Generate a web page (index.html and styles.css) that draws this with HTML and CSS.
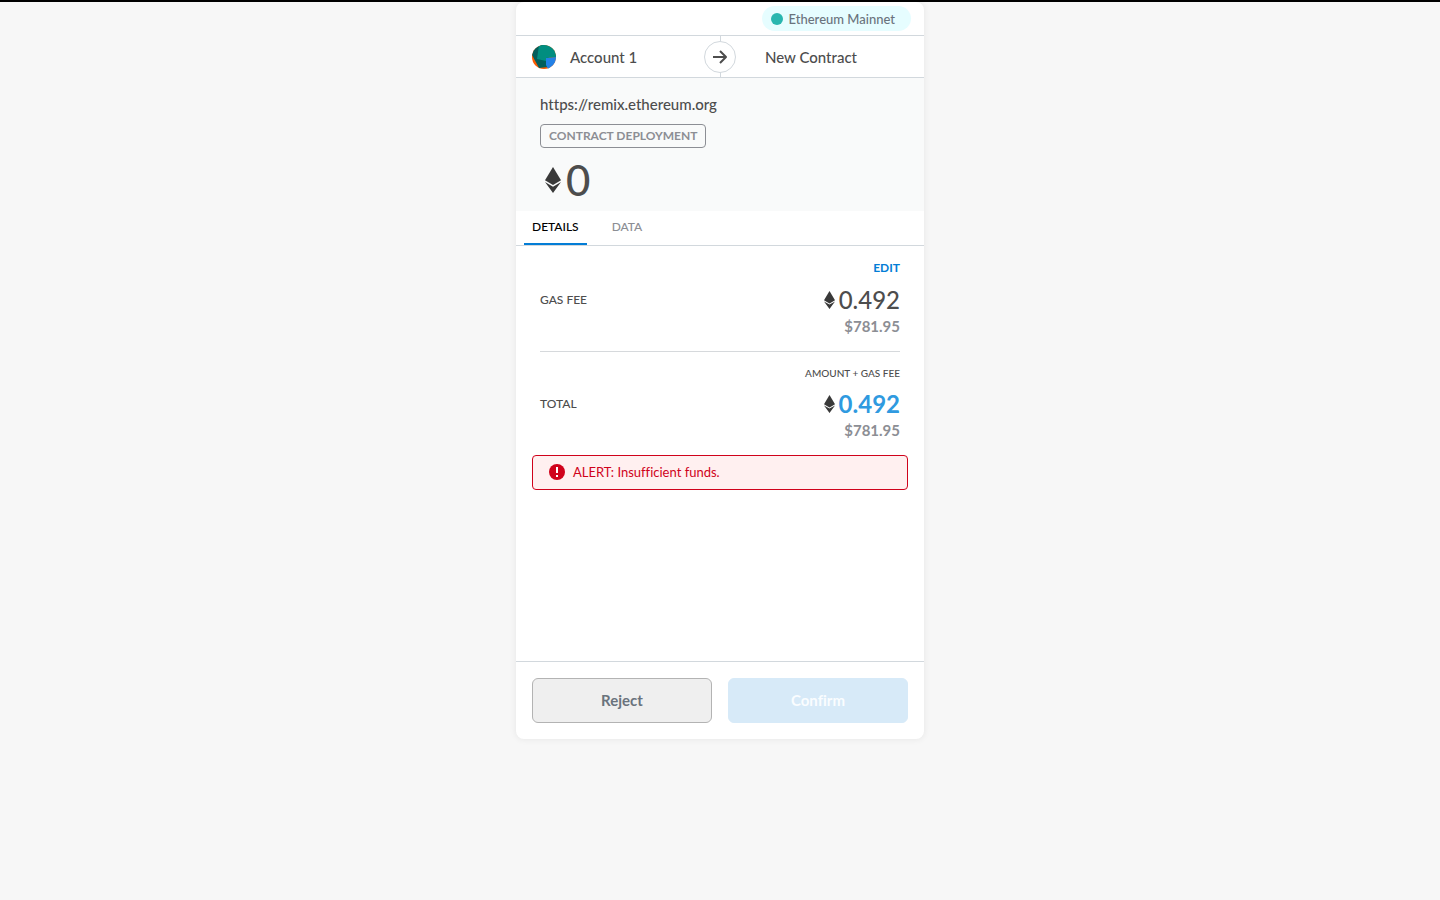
FILE: index.html
```html
<!DOCTYPE html>
<html lang="en">
<head>
<meta charset="utf-8">
<meta name="viewport" content="width=device-width, initial-scale=1">
<title>Contract Deployment</title>
<link rel="stylesheet" href="styles.css">
</head>
<body>
<svg class="sprite" aria-hidden="true">
  <symbol id="eth" viewBox="0 0 16 26">
    <path d="M8 0 0 13.3 8 18l8-4.700z" fill="#393939"/>
    <path d="M0 15l8 11 8-11-8 4.700z" fill="#393939"/>
  </symbol>
</svg>
<main class="card">
  <header class="network-row">
    <div class="network"><span class="network-dot"></span><span>Ethereum Mainnet</span></div>
  </header>
  <section class="parties">
    <div class="party sender">
      <svg class="avatar" viewBox="0 0 24 24" aria-hidden="true">
        <clipPath id="round"><circle cx="12" cy="12" r="12"/></clipPath>
        <g clip-path="url(#round)">
          <path d="M0 0h24v24H0z" fill="#fa5b00"/>
          <path d="M0 0h12l5 14-1 8-9 1L0 10z" fill="#035e5b"/>
          <path d="M14 13l10-1v12h-8l-2-4z" fill="#2381e6"/>
          <path d="M7 0h17v12l-10 1v3l-9-2z" fill="#018e80"/>
        </g>
      </svg>
      <span>Account 1</span>
    </div>
    <div class="arrow">
      <svg class="arrow-icon" viewBox="0 0 16 16" aria-hidden="true"><path d="M1 8h13M8 2l6 6-6 6" fill="none" stroke="#4d4d4d" stroke-width="2" stroke-linejoin="round"/></svg>
    </div>
    <div class="party recipient">New Contract</div>
  </section>
  <section class="summary">
    <div class="origin">https://remix.ethereum.org</div>
    <div class="action">CONTRACT DEPLOYMENT</div>
    <div class="amount"><svg class="eth eth-large" aria-hidden="true"><use href="#eth"/></svg><span>0</span></div>
  </section>
  <nav class="tabs">
    <button class="tab tab-active" type="button">DETAILS</button>
    <button class="tab" type="button">DATA</button>
  </nav>
  <section class="details">
    <div class="fee">
      <button class="edit" type="button">EDIT</button>
      <div class="fee-row">
        <span class="label">GAS FEE</span>
        <span class="value"><svg class="eth" aria-hidden="true"><use href="#eth"/></svg><span>0.492</span></span>
      </div>
      <div class="fiat">$781.95</div>
    </div>
    <div class="fee total">
      <div class="hint">AMOUNT + GAS FEE</div>
      <div class="fee-row">
        <span class="label">TOTAL</span>
        <span class="value value-primary"><svg class="eth" aria-hidden="true"><use href="#eth"/></svg><span>0.492</span></span>
      </div>
      <div class="fiat">$781.95</div>
    </div>
  </section>
  <div class="alert" role="alert">
    <svg class="alert-icon" viewBox="0 0 16 16" aria-hidden="true"><circle cx="8" cy="8" r="8" fill="#d0021b"/><path d="M8 3v6M8 11v2" stroke="#fff" stroke-width="2"/></svg>
    <span>ALERT: Insufficient funds.</span>
  </div>
  <footer class="actions">
    <button class="btn btn-reject" type="button">Reject</button>
    <button class="btn btn-confirm" type="button" disabled>Confirm</button>
  </footer>
</main>
</body>
</html>
```
FILE: styles.css
```css
* { box-sizing: border-box; }
body {
  margin: 0;
  min-height: 100vh;
  border-top: 2px solid #000;
  background: #f7f7f7;
  color: #4d4d4d;
  font-family: Lato, "Open Sans", sans-serif;
  font-size: 15px;
  font-variant-ligatures: none;
  line-height: 20px;
}
button { margin: 0; border: 0; background: none; font: inherit; cursor: pointer; }
.sprite { position: absolute; width: 0; height: 0; }
.card {
  display: flex;
  flex-direction: column;
  width: 100%;
  max-width: 408px;
  min-height: calc(82vh - 1px);
  margin: 0 auto;
  border-radius: 8px;
  background: #fff;
  box-shadow: 0 0 7px rgba(0, 0, 0, 0.08);
}
.network-row {
  display: flex;
  justify-content: flex-end;
  padding: 4px 13px;
  border-bottom: 1px solid #d2d8dd;
}
.network {
  display: flex;
  align-items: center;
  gap: 6px;
  padding: 3px 16px 2px 9px;
  border-radius: 13px;
  background: #e6fdff;
  color: #6a737d;
  font-size: 13px;
  font-weight: 500;
}
.network-dot { width: 12px; height: 12px; border-radius: 50%; background: #29b6af; }
.parties {
  display: grid;
  grid-template-columns: 1fr 32px 1fr;
  border-bottom: 1px solid #d2d8dd;
  font-weight: 500;
}
.party { display: flex; align-items: center; height: 41px; }
.sender { gap: 14px; padding-left: 16px; }
.recipient { padding-left: 29px; }
.avatar { width: 24px; height: 24px; }
.arrow {
  display: flex;
  align-items: center;
  justify-content: center;
  background: linear-gradient(#d2d8dd, #d2d8dd) center / 1px 100% no-repeat;
}
.arrow-icon {
  width: 32px;
  height: 32px;
  padding: 7px;
  border: 1px solid #d2d8dd;
  border-radius: 50%;
  background: #fff;
}
.summary { padding: 16px 24px 11px; background: #f9fafa; font-weight: 500; }
.action {
  width: fit-content;
  margin-top: 10px;
  padding: 1px 8px;
  border: 1px solid #8c8e94;
  border-radius: 4px;
  color: #8c8e94;
  font-size: 12px;
  font-weight: 700;
}
.amount {
  display: flex;
  align-items: center;
  gap: 5px;
  margin-top: 12px;
  padding-left: 5px;
  font-size: 42px;
  line-height: 40px;
}
.eth { width: 11px; height: 18px; }
.eth-large { width: 16px; height: 26px; }
.tabs { display: flex; padding-left: 8px; border-bottom: 1px solid #d2d8dd; }
.tab {
  margin-right: 17px;
  padding: 6px 8px;
  border-bottom: 2px solid transparent;
  color: #8c8e94;
  font-size: 12px;
  font-weight: 500;
}
.tab-active { border-color: #037dd6; color: #000; }
.details { padding: 0 24px; font-weight: 500; }
.fee {
  display: flex;
  flex-direction: column;
  padding: 14px 0;
  border-bottom: 1px solid #d6d9dc;
}
.total { padding-top: 13px; border: 0; }
.edit {
  align-self: flex-end;
  padding: 0;
  color: #037dd6;
  font-size: 12px;
  font-weight: 700;
  line-height: 16px;
}
.hint { text-align: right; font-size: 10px; line-height: 16px; }
.fee-row {
  display: flex;
  align-items: center;
  justify-content: space-between;
  margin-top: 8px;
}
.total .fee-row { margin-top: 7px; }
.label { font-size: 12px; }
.value { display: flex; align-items: center; gap: 4px; font-size: 24px; line-height: 31px; }
.value-primary { color: #2f9ae0; font-weight: 700; }
.fiat { color: #8c8e94; text-align: right; font-size: 15px; font-weight: 700; line-height: 22px; }
.alert {
  display: flex;
  align-items: center;
  gap: 8px;
  margin: 0 16px;
  padding: 6px 16px 7px;
  border: 1px solid #d0021b;
  border-radius: 4px;
  background: #fff0f0;
  color: #d0021b;
  font-size: 13px;
}
.alert-icon { width: 16px; height: 16px; }
.actions {
  display: grid;
  grid-template-columns: 1fr 1fr;
  gap: 16px;
  margin-top: auto;
  padding: 16px;
  border-top: 1px solid #d2d8dd;
}
.btn { padding: 11px 12px 12px; border: 1px solid #b3b3b3; border-radius: 6px; font-weight: 700; line-height: 20px; }
.btn-reject { background: #efefef; color: #6a737d; }
.btn-confirm { border-color: #d7eaf8; background: #d7eaf8; color: #fafdff; }
```
